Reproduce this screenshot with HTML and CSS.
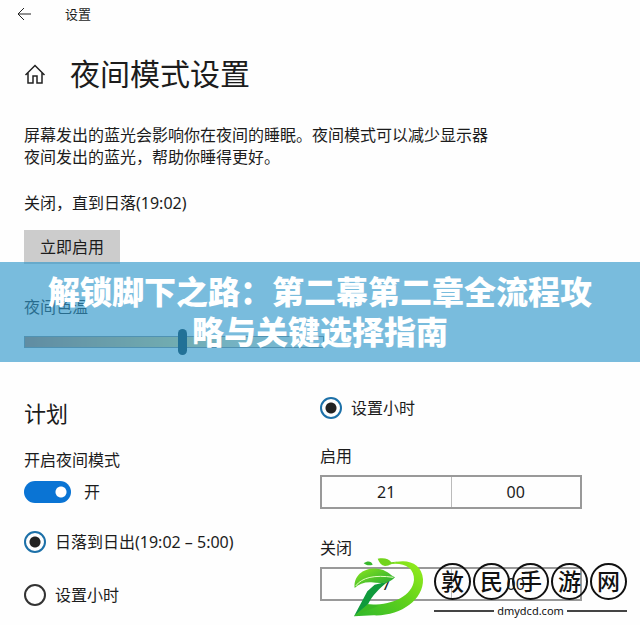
FILE: index.html
```
<!DOCTYPE html>
<html lang="zh-CN">
<head>
    <meta charset="UTF-8">
    <meta name="viewport" content="width=device-width, initial-scale=1.0">
    <title>夜间模式设置</title>
    <link rel="stylesheet" href="styles.css">
</head>
<body>
    <!-- Barre du haut -->
    <header class="topbar">
        <button class="back-btn" type="button" aria-label="返回">
            <svg width="14" height="14" viewBox="0 0 14 14"><path d="M14 7H1M7 1L1 7l6 6"/></svg>
        </button>
        <span>设置</span>
    </header>

    <main class="page">
        <div class="page-title">
            <svg class="home-icon" width="22" height="22" viewBox="0 0 22 22"><path d="M1.500 12L11 2.500l9.500 9.500M4 10v10h5v-7h4v7h5V10"/></svg>
            <h1>夜间模式设置</h1>
        </div>

        <p class="intro">屏幕发出的蓝光会影响你在夜间的睡眠。夜间模式可以减少显示器夜间发出的蓝光，帮助你睡得更好。</p>
        <p class="status">关闭，直到日落(19:02)</p>
        <button class="enable-btn" type="button">立即启用</button>

        <div class="temperature">
            <label for="temperature">夜间色温</label>
            <input id="temperature" class="slider" type="range" min="0" max="100" value="53">
        </div>

        <div class="columns">
            <section class="schedule">
                <h2>计划</h2>
                <label for="night-mode">开启夜间模式</label>
                <div class="switch-row">
                    <input id="night-mode" class="switch" type="checkbox" checked>
                    <span>开</span>
                </div>
                <label class="radio-row"><input type="radio" name="schedule" checked>日落到日出(19:02 – 5:00)</label>
                <label class="radio-row"><input type="radio" name="schedule">设置小时</label>
            </section>

            <section class="hours">
                <label class="radio-row"><input type="radio" name="hours" checked>设置小时</label>
                <label for="on-hour">启用</label>
                <div class="time-box">
                    <input id="on-hour" type="text" value="21">
                    <input type="text" value="00" aria-label="启用分钟">
                </div>
                <label for="off-hour">关闭</label>
                <div class="time-box">
                    <input id="off-hour" type="text" value="7">
                    <input type="text" value="00" aria-label="关闭分钟">
                </div>
            </section>
        </div>
    </main>

    <!-- Bandeau titre -->
    <div class="banner">解锁脚下之路：第二幕第二章全流程攻略与关键选择指南</div>

    <!-- Logo du site -->
    <div class="watermark">
        <svg class="leaf" width="80" height="70" viewBox="0 0 240 210">
            <defs>
                <linearGradient id="bow" x1="0" y1="1" x2="1" y2="0">
                    <stop offset="0" stop-color="#2fb82c"/>
                    <stop offset="0.5" stop-color="#5ed01c"/>
                    <stop offset="1" stop-color="#98ee1c"/>
                </linearGradient>
                <linearGradient id="leaf" x1="0" y1="0" x2="1" y2="1">
                    <stop offset="0" stop-color="#8ee81c"/>
                    <stop offset="1" stop-color="#14a038"/>
                </linearGradient>
            </defs>
            <path fill="url(#bow)" d="M118 37C166 16 216 32 219 82C221 144 150 194 70 190L12 193L50 157C120 162 186 136 192 84C194 46 158 30 118 37Z"/>
            <path fill="#109a3c" d="M12 193L52 118L74 98L116 88C88 108 66 132 54 157Z"/>
            <path fill="#3cba24" d="M12 193L54 157L86 161L50 176Z"/>
            <path fill="url(#leaf)" d="M14 108C10 70 42 46 82 50C110 53 118 67 135 76C116 98 88 94 64 91C44 90 26 96 14 108Z"/>
            <path fill="none" stroke="#e4ffc0" stroke-width="3" d="M17 102C36 76 74 68 130 76"/>
            <path fill="#72d41c" d="M83 20C104 17 116 20 124 31L150 28C126 32 120 42 105 42C94 40 88 32 83 20Z"/>
            <path fill="#38b82c" d="M41 34C53 25 64 27 68 38C58 42 48 40 41 34Z"/>
        </svg>
        <div class="brand">
            <div class="brand-name"><span>敦</span><span>民</span><span>手</span><span>游</span><span>网</span></div>
            <div class="brand-url">dmydcd.com</div>
        </div>
    </div>
</body>
</html>
```
FILE: styles.css
```
* {
    box-sizing: border-box;
}

body {
    position: relative;
    margin: 0;
    min-height: 100vh;
    background: #fefefe;
    color: #1c1c1c;
    font-family: "Noto Sans", "Noto Sans CJK SC", sans-serif;
    font-size: 16px;
    line-height: 22px;
}

h1, h2, p {
    margin: 0;
    font-weight: 400;
}

button, input {
    margin: 0;
    color: inherit;
    font: inherit;
}

svg {
    flex-shrink: 0;
}

/* Barre du haut */
.topbar {
    display: flex;
    align-items: center;
    gap: 34px;
    height: 28px;
    padding-left: 17px;
    font-size: 13px;
}

.back-btn {
    display: flex;
    padding: 0;
    border: none;
    background: none;
}

.back-btn svg, .home-icon {
    fill: none;
    stroke: #222;
}

.page {
    padding: 24px 24px 0;
}

.page-title {
    display: flex;
    align-items: center;
    gap: 24px;
    height: 44px;
}

.home-icon {
    stroke-width: 1.5;
}

h1 {
    font-size: 30px;
    line-height: 44px;
}

.intro {
    max-width: 476px;
    margin-top: 28px;
}

.status {
    margin-top: 24px;
}

.enable-btn {
    display: block;
    height: 34px;
    margin-top: 16px;
    padding: 0 16px;
    border: none;
    background: #ccc;
}

.temperature {
    display: flex;
    flex-direction: column;
    max-width: 300px;
    margin-top: 32px;
}

.slider {
    appearance: none;
    width: 100%;
    height: 12px;
    margin-top: 18px;
    border: 1px solid #888;
    background: linear-gradient(90deg, #b87858, #e8d080 50%, #fff);
}

.slider::-webkit-slider-thumb {
    appearance: none;
    width: 9px;
    height: 26px;
    border-radius: 5px;
    background: #082838;
}

/* Deux colonnes */
.columns {
    display: grid;
    grid-template-columns: 1fr 1fr;
    margin-top: 45px;
}

.schedule, .hours {
    display: flex;
    flex-direction: column;
    align-items: flex-start;
}

h2 {
    margin: 8px 0 24px;
    font-size: 22px;
    line-height: 24px;
}

.switch-row {
    display: flex;
    align-items: center;
    gap: 13px;
    margin: 10px 0 28px;
}

.switch {
    appearance: none;
    width: 47px;
    height: 22px;
    border-radius: 11px;
    background: radial-gradient(circle at 37px 11px, #fff 5px, #0a74d4 6px);
}

.radio-row {
    display: flex;
    align-items: center;
    gap: 9px;
}

.radio-row input {
    appearance: none;
    width: 22px;
    height: 22px;
    border: 2px solid #333;
    border-radius: 50%;
}

.radio-row input:checked {
    border-color: #1c70a8;
    background: radial-gradient(circle, #222 5px, transparent 6px);
}

.schedule .radio-row + .radio-row {
    margin-top: 31px;
}

.hours .radio-row {
    margin: 4px 0 26px;
}

.time-box {
    display: flex;
    width: 100%;
    max-width: 262px;
    height: 34px;
    margin: 8px 0 28px;
    border: 2px solid #999;
}

.time-box:last-child {
    margin-bottom: 0;
}

.time-box input {
    flex: 1;
    min-width: 0;
    padding: 0;
    border: none;
    background: none;
    text-align: center;
}

.time-box input + input {
    border-left: 1px solid #bbb;
}

/* Bandeau par-dessus la page */
.banner {
    position: absolute;
    top: 262px;
    left: 0;
    right: 0;
    padding: 10px 48px;
    background: rgba(49, 152, 203, 0.65);
    color: #fff;
    font-size: 32px;
    font-weight: 900;
    line-height: 40px;
    text-align: center;
}

/* Logo en bas à droite */
.watermark {
    position: absolute;
    top: 552px;
    right: 13px;
    display: flex;
    gap: 4px;
}

.brand {
    padding-top: 11px;
    color: #111;
}

.brand-name {
    display: flex;
    gap: 2px;
}

.brand-name span {
    width: 37px;
    height: 37px;
    border: 2px solid #111;
    border-radius: 50%;
    font-size: 23px;
    font-weight: 500;
    line-height: 32px;
    text-align: center;
}

.brand-url {
    display: flex;
    align-items: center;
    gap: 3px;
    font-size: 11px;
    line-height: 22px;
}

.brand-url::before, .brand-url::after {
    content: "";
    flex: 1;
    height: 2px;
    background: #444;
}
```
